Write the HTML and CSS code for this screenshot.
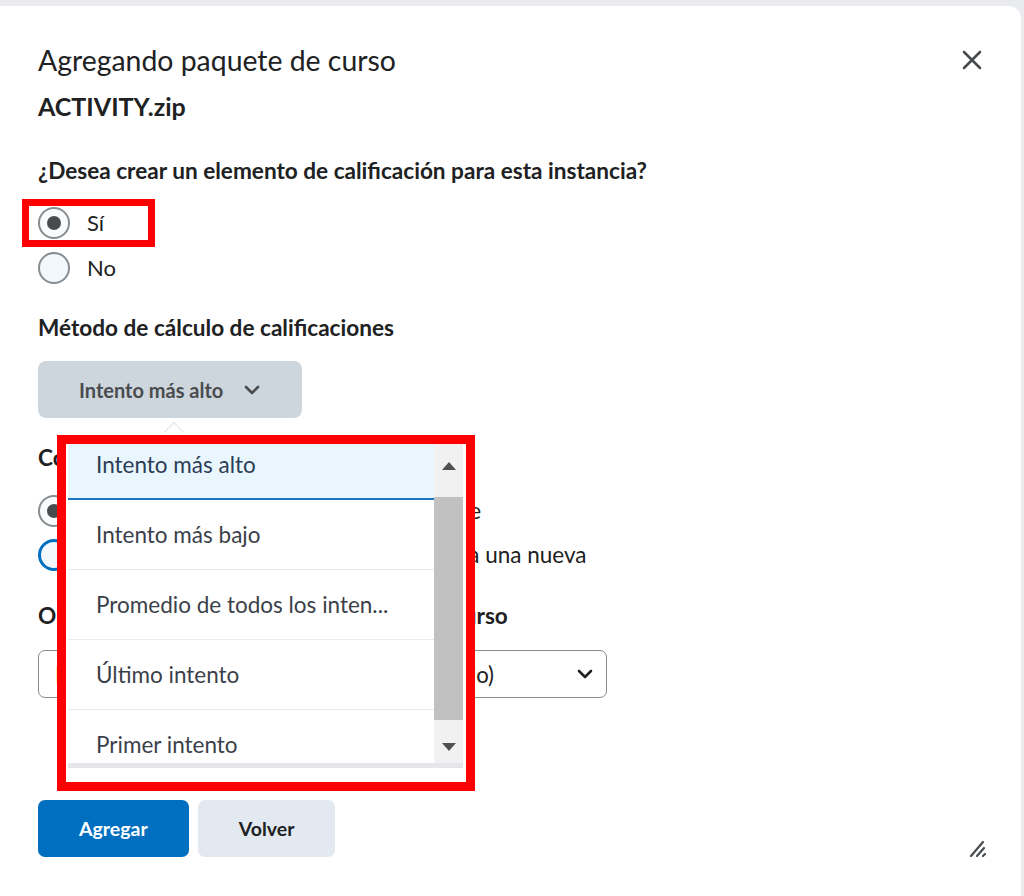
FILE: index.html
```html
<!DOCTYPE html>
<html lang="es">
<head>
	<meta charset="UTF-8">
	<title>Agregando paquete de curso</title>
	<link rel="stylesheet" href="styles.css">
</head>
<body>
	<div class="dialog">
		<div class="dialog-head">
			<h1 class="title">Agregando paquete de curso</h1>
			<button class="close" type="button" aria-label="Cerrar">
				<svg width="22" height="22" viewBox="0 0 22 22"><path d="M3 3L19 19M19 3L3 19" stroke="#494c4e" stroke-width="2.6" stroke-linecap="round"/></svg>
			</button>
		</div>
		<div class="filename">ACTIVITY.zip</div>

		<div class="field first">
			<div class="label">¿Desea crear un elemento de calificación para esta instancia?</div>
			<label class="radio"><span class="dot checked"></span>Sí<span class="mark-si"></span></label>
			<label class="radio"><span class="dot"></span>No</label>
		</div>

		<div class="field method">
			<div class="label">Método de cálculo de calificaciones</div>
			<div class="dropdown">
				<button class="dd-btn" type="button">Intento más alto
					<svg width="18" height="12" viewBox="0 0 18 12"><path d="M3 3L9 9L15 3" fill="none" stroke="#494c4e" stroke-width="2.6" stroke-linecap="round" stroke-linejoin="round"/></svg>
				</button>
				<div class="caret"></div>
				<div class="dd-menu">
					<div class="dd-view">
						<div class="dd-list">
							<div class="dd-item active">Intento más alto</div>
							<div class="dd-item">Intento más bajo</div>
							<div class="dd-item">Promedio de todos los inten...</div>
							<div class="dd-item">Último intento</div>
							<div class="dd-item">Primer intento</div>
						</div>
						<div class="scrollbar">
							<div class="sb-up"></div>
							<div class="sb-thumb"></div>
							<div class="sb-down"></div>
						</div>
					</div>
					<div class="dd-foot"></div>
				</div>
			</div>
		</div>

		<div class="field link">
			<div class="label">Conectar con el libro de calificaciones</div>
			<label class="radio"><span class="dot checked"></span>Elegir elemento de calificación existente</label>
			<label class="radio"><span class="dot focus"></span>Crear elemento de calificación y unirlo a una nueva</label>
		</div>

		<div class="field category">
			<div class="label">Organizar en una categoría en el libro del curso</div>
			<div class="select">
				<span>Ninguna categoría (nivel superior del módulo)</span>
				<svg width="18" height="12" viewBox="0 0 18 12"><path d="M3 3L9 9L15 3" fill="none" stroke="#202122" stroke-width="2.6" stroke-linecap="round" stroke-linejoin="round"/></svg>
			</div>
		</div>

		<div class="actions">
			<button class="btn primary" type="button">Agregar</button>
			<button class="btn" type="button">Volver</button>
			<svg class="resize" width="20" height="20" viewBox="0 0 20 20"><path d="M3 18L15 4M9 18L16 10M15 18L17 16" stroke="#494c4e" stroke-width="2.2" stroke-linecap="round"/></svg>
		</div>
	</div>
</body>
</html>
```
FILE: styles.css
```css
* { box-sizing: border-box; }
body { margin: 0; background: #e9ebee; font-family: Lato, "Noto Sans", sans-serif; color: #202122; }
button { font-family: inherit; }

.dialog { margin: 6px 3px 0 0; min-height: 890px; background: #fff; border-radius: 0 12px 0 0; padding: 36px 38px 0 38px; position: relative; }
.dialog-head { display: flex; justify-content: space-between; align-items: center; height: 36px; }
.title { margin: 0; font-size: 28.4px; font-weight: 400; line-height: 36px; color: #202122; }
.close { border: 0; background: none; padding: 0; width: 22px; height: 22px; }
.close svg { display: block; }
.filename { margin-top: 13px; font-size: 25px; font-weight: 700; line-height: 30px; }

.label { font-size: 22.6px; font-weight: 700; line-height: 28px; white-space: nowrap; }
.field.first { margin-top: 36px; }
.field.first .label { margin-bottom: 15px; }
.radio { display: flex; align-items: center; height: 45px; font-size: 22px; line-height: 28px; position: relative; white-space: nowrap; }
.dot { width: 32px; height: 32px; border: 2px solid #868c8f; border-radius: 50%; background: #f2f8fd; margin-right: 17px; flex: none; position: relative; }
.dot.checked { background: #fafbfc; }
.dot.checked::after { content: ""; position: absolute; left: 7px; top: 7px; width: 14px; height: 14px; border-radius: 50%; background: #494c4e; }
.dot.focus { border-color: #006fbf; border-width: 3px; }
.mark-si { position: absolute; left: -16px; top: -1px; width: 133px; height: 48px; border: 7px solid #ff0000; }

.field.method { margin-top: 24px; }
.field.method .label { margin-bottom: 19px; }
.dropdown { position: relative; }
.dd-btn { display: flex; align-items: center; gap: 20px; height: 57px; padding: 0 41px 0 41px; border: 0; border-radius: 8px; background: #cdd5dd; font-size: 20px; font-weight: 700; color: #494c4e; }
.dd-btn svg { display: block; }
.caret { position: absolute; left: 129px; top: 64px; width: 14px; height: 14px; border-top: 1px solid #e0e3e6; border-left: 1px solid #e0e3e6; background: #fff; transform: rotate(45deg); }
.dd-menu { position: absolute; left: 19px; top: 74px; width: 418px; height: 356px; border: 9px solid #ff0000; background: #fff; padding: 0 3px 0 2px; z-index: 2; }
.dd-view { display: flex; height: 319px; overflow: hidden; }
.dd-list { flex: 1; margin-top: -14px; }
.dd-item { height: 70px; line-height: 70px; padding-left: 28px; font-size: 22.5px; color: #3b3f4a; border-bottom: 1px solid #e6ebf2; white-space: nowrap; }
.dd-item.active { background: #e9f6fd; border-bottom: 2px solid #1a75c4; color: #2c3d55; }
.scrollbar { width: 29px; background: #f1f1f1; display: flex; flex-direction: column; align-items: center; }
.sb-up, .sb-down { width: 0; height: 0; border-left: 7px solid transparent; border-right: 7px solid transparent; }
.sb-up { border-bottom: 8px solid #505050; margin: 18px 0 27px; }
.sb-thumb { width: 29px; height: 223px; background: #c1c1c1; }
.sb-down { border-top: 8px solid #505050; margin-top: 23px; }
.dd-foot { height: 19px; border-top: 5px solid #e4e6e9; }

.field.link { margin-top: 26px; }
.field.link .label { margin-bottom: 17px; }
.field.link .radio { height: 44px; font-size: 22.5px; }
.field.category { margin-top: 25px; }
.field.category .label { margin-bottom: 20px; }
.select { display: flex; align-items: center; justify-content: space-between; width: 569px; height: 48px; border: 1px solid #868c8f; border-radius: 7px; padding: 0 12px 0 16px; font-size: 22.2px; white-space: nowrap; }
.select span { overflow: hidden; }

.actions { margin-top: 102px; display: flex; gap: 9px; align-items: center; }
.btn { height: 57px; padding: 0 41px; border: 0; border-radius: 7px; background: #e3e9f1; font-size: 19.5px; font-weight: 700; color: #202122; }
.btn.primary { background: #006fbf; color: #fff; }
.resize { position: absolute; right: 33px; bottom: 38px; }
```
